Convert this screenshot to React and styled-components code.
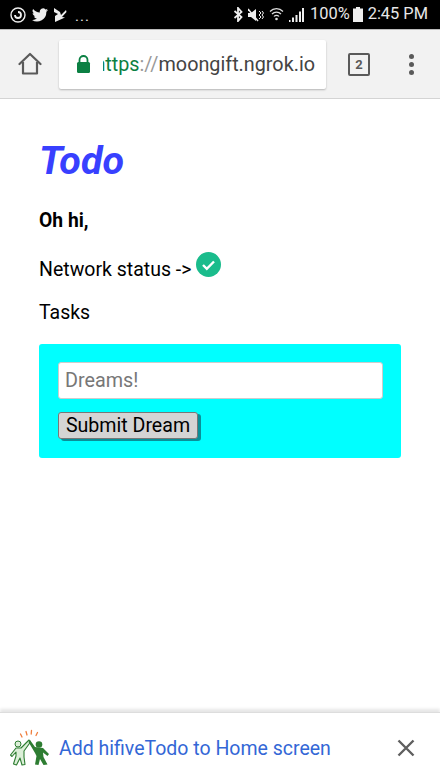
import React from "react";
import styled, { createGlobalStyle } from "styled-components";

const Global = createGlobalStyle`
  html, body { margin: 0; padding: 0; background: #fff; }
  body { font-family: Roboto, "Liberation Sans", sans-serif; }
  #root { width: 440px; height: 782px; overflow: hidden; }
  * { box-sizing: border-box; }
`;

const Screen = styled.div`
  width: 440px; height: 782px; display: flex; flex-direction: column; background: #fff;
`;
const StatusBar = styled.div`
  height: 29px; flex: none; background: #000; color: #e8e8e8; display: flex; align-items: center;
  justify-content: space-between; padding: 0 12px 0 10px;
`;
const StatusGroup = styled.div`
  display: flex; align-items: center; gap: ${p => p.$gap || 4}px;
`;
const Dots = styled.span`
  font-size: 15px; letter-spacing: 1px; margin-left: 2px; position: relative; top: 2px; line-height: 1;
`;
const StatusText = styled.span`
  font-size: 16.4px; line-height: 1; white-space: nowrap; margin: ${p => p.$margin || 0};
`;
const Toolbar = styled.div`
  height: 70px; flex: none; background: #f2f2f2; border-bottom: 1px solid #d4d4d4; border-top: 1px solid #bbb;
  display: flex; align-items: center;
`;
const HomeSlot = styled.div`
  width: 59px; flex: none; display: flex; justify-content: center;
`;
const Omnibox = styled.div`
  width: 267px; height: 49px; flex: none; background: #fff; border-radius: 2px; box-shadow: 0 1px 2px rgba(0,0,0,.25);
  display: flex; align-items: center; padding-left: 17px; overflow: hidden;
`;
const Url = styled.div`
  font-size: 19.8px; color: #444; margin-left: 12px; width: 212px; overflow: hidden;
  display: flex; justify-content: flex-end; white-space: nowrap;
`;
const UrlInner = styled.span`
  flex: none;
`;
const Green = styled.span` color: #0b8043; `;
const Faint = styled.span` color: #999; `;
const TabCount = styled.div`
  width: 22px; height: 23px; border: 2.5px solid #5a5a5a; border-radius: 2px; margin-left: 22px;
  font-size: 13px; font-weight: 700; color: #5a5a5a; display: flex; align-items: center; justify-content: center; flex: none;
`;
const Kebab = styled.div`
  display: flex; flex-direction: column; gap: 3px; margin-left: 39px;
`;
const Dot = styled.i`
  display: block; width: 5px; height: 5px; border-radius: 50%; background: #5a5a5a;
`;
const Page = styled.main`
  flex: 1; padding: 40px 39px 0; color: #000;
`;
const Title = styled.h1`
  margin: 0; color: #3840ff; font-style: italic; font-weight: 700; font-size: 39.4px; line-height: 44px;
`;
const Greeting = styled.p`
  margin: 27px 0 0; font-weight: 700; font-size: 19.3px; line-height: 22px;
`;
const StatusLine = styled.div`
  margin-top: 20px; display: flex; align-items: flex-start; height: 31px;
  font-size: 19.5px; line-height: 22px;
`;
const StatusLabel = styled.span`
  margin-top: 7px;
`;
const CheckBadge = styled.svg`
  width: 25px; height: 25px; margin-left: 5px;
`;
const Tasks = styled.p`
  margin: 19px 0 0; font-size: 19.5px; line-height: 22px;
`;
const DreamCard = styled.form`
  margin-top: 20px; width: 362px; height: 114px; background: #00ffff; border-radius: 3px; padding: 18px 19px;
  display: flex; flex-direction: column; align-items: flex-start;
`;
const DreamInput = styled.input`
  width: 325px; height: 37px; border: 1px solid #ccc; border-radius: 3px; background: #fff; padding: 0 6px;
  font: 400 19.8px Roboto, sans-serif; color: #000; outline: none;
  &::placeholder { color: #777; opacity: 1; }
`;
const SubmitButton = styled.button`
  margin-top: 13px; width: 140px; height: 27px; padding: 0; border: 1px solid #777; border-radius: 3px; background: #d4d4d4;
  box-shadow: 3px 2px 0 #0a8f98; font: 400 19.6px/24px Roboto, sans-serif; color: #000;
`;
const Banner = styled.div`
  height: 70px; flex: none; background: #fff; display: flex; align-items: center; padding: 0 0 0 10px;
  border-top: 1px solid #ddd; box-shadow: 0 -3px 3px rgba(0,0,0,.1);
`;
const BannerText = styled.span`
  color: #3367d6; font-size: 19.5px; margin-left: 9px; white-space: nowrap; flex: 1; position: relative; top: 1px;
`;
const Close = styled.div`
  margin-right: 25px; display: flex;
`;

const Home = () => (
  <svg width="24" height="24" viewBox="0 0 24 24" fill="none" stroke="#5a5a5a" strokeWidth="2.2" strokeLinejoin="round">
    <path d="M1.5 12 12 2l10.500 10" strokeLinecap="round" />
    <path d="M5 10v11.500h14V10" />
  </svg>
);
const Lock = () => (
  <svg width="15" height="19" viewBox="0 0 15 19">
    <path d="M3.500 8V5a4 4 0 0 1 8 0v3" fill="none" stroke="#0b8043" strokeWidth="1.800" />
    <rect x="1" y="7" width="13" height="11" rx="1.500" fill="#0b8043" />
  </svg>
);
const Twitter = () => (
  <svg width="16" height="14" viewBox="0 0 24 20" fill="#eee">
    <path d="M24 2.400a9.800 9.800 0 0 1-2.800.8A4.900 4.900 0 0 0 23.300.500a9.800 9.800 0 0 1-3.100 1.200 4.900 4.900 0 0 0-8.400 4.500A14 14 0 0 1 1.700 1a4.900 4.900 0 0 0 1.500 6.600 4.900 4.900 0 0 1-2.200-.6c0 2.400 1.700 4.400 3.900 4.900a4.900 4.900 0 0 1-2.200.1 4.900 4.900 0 0 0 4.600 3.400A9.900 9.900 0 0 1 0 17.400 14 14 0 0 0 21.500 5c1-.7 1.900-1.600 2.500-2.600z" />
  </svg>
);
const Pocket = () => (
  <svg width="13" height="14" viewBox="0 0 13 14" fill="#eee">
    <path d="M0 0 6 4 7 7 12 2 12.500 4 8 9l3 .5L1 14V8L4 6 0 4z" />
  </svg>
);
const Ring = () => (
  <svg width="16" height="16" viewBox="0 0 16 16" fill="none" stroke="#eee" strokeWidth="1.400">
    <circle cx="8" cy="8" r="7" />
    <path d="M5 8a3 3 0 1 0 6 0 3 3 0 0 0-3-3" strokeWidth="1.800" />
  </svg>
);
const Bluetooth = () => (
  <svg width="10" height="15" viewBox="0 0 9 15" fill="none" stroke="#eee" strokeWidth="1.800">
    <path d="M1 4l7 6-3.500 4V1L8 5l-7 6" />
  </svg>
);
const Muted = () => (
  <svg width="16" height="14" viewBox="0 0 16 14" fill="#eee">
    <path d="M0 5h3l5-4v12L3 9H0z" />
    <path d="M0 1l10 12" stroke="#eee" strokeWidth="1.500" />
    <path d="M11 3l2 2-2 2 2 2-2 2M14 3l1.500 2L14 7l1.500 2L14 11" fill="none" stroke="#eee" strokeWidth="1" />
  </svg>
);
const Wifi = () => (
  <svg width="15" height="15" viewBox="0 0 15 15" fill="none" stroke="#ddd" strokeWidth="1.200">
    <path d="M1 4.500a9 9 0 0 1 13 0M3 7a6.200 6.200 0 0 1 9 0M5 9.500a3.200 3.200 0 0 1 5 0" />
    <circle cx="7.500" cy="12" r="1.300" fill="#ddd" stroke="none" />
  </svg>
);
const Signal = () => (
  <svg width="15" height="14" viewBox="0 0 15 14" fill="#eee">
    <path d="M0 14h1.500v-2H0zM3 14h2V9.500H3zM6.500 14h2V7h-2zM10 14h2V3.500h-2zM13 14h2V0h-2z" />
  </svg>
);
const Battery = () => (
  <svg width="10" height="15" viewBox="0 0 10 15" fill="#eee">
    <path d="M3 0h4v1.500h3V15H0V1.500h3z" />
  </svg>
);
const Logo = () => (
  <svg width="40" height="38" viewBox="0 0 40 38" strokeLinejoin="round">
    <path d="M10.500 5l1.500 3M16 2.500l1 3.500M21.500 1.500l-.3 3.500M27.500 3.500l-1.500 3" stroke="#ef7d3c" strokeWidth="1.300" strokeLinecap="round" fill="none" />
    <path d="M19 11 20.500 13 14 22V28L15 35.500 12 36 10 29 6.500 36 3.500 35 6 27V23L2 27.500.5 26 6 19H11z" fill="#dcefd8" stroke="#2e7d32" strokeWidth="1.100" />
    <circle cx="8" cy="15" r="3" fill="#dcefd8" stroke="#2e7d32" strokeWidth="1" />
    <path d="M20 11 25 18 33 19 39 25 37.500 27 33 23.500 33.500 28 37.500 35.500 33.500 36 30 30 28.500 36 25 35.500 26.500 27 25 24 18.500 13z" fill="#2e7d32" />
    <circle cx="29" cy="15.500" r="3.300" fill="#2e7d32" />
  </svg>
);

export default function App() {
  return (
    <Screen>
      <Global />
      <StatusBar>
        <StatusGroup $gap={6}>
          <Ring /><Twitter /><Pocket /><Dots>...</Dots>
        </StatusGroup>
        <StatusGroup $gap={5}>
          <Bluetooth /><Muted /><Wifi /><Signal />
          <StatusText $margin="0 -2px 0 1px">100%</StatusText><Battery /><StatusText>2:45 PM</StatusText>
        </StatusGroup>
      </StatusBar>
      <Toolbar>
        <HomeSlot><Home /></HomeSlot>
        <Omnibox>
          <Lock />
          <Url>
            <UrlInner><Green>https</Green><Faint>://</Faint>moongift.ngrok.io</UrlInner>
          </Url>
        </Omnibox>
        <TabCount>2</TabCount>
        <Kebab><Dot /><Dot /><Dot /></Kebab>
      </Toolbar>
      <Page>
        <Title>Todo</Title>
        <Greeting>Oh hi,</Greeting>
        <StatusLine>
          <StatusLabel>Network status -&gt;</StatusLabel>
          <CheckBadge viewBox="0 0 25 25">
            <circle cx="12.500" cy="12.500" r="12.500" fill="#1abc8c" />
            <path d="M7 13l3.800 3.800L18 9.500" fill="none" stroke="#fff" strokeWidth="2.400" />
          </CheckBadge>
        </StatusLine>
        <Tasks>Tasks</Tasks>
        <DreamCard onSubmit={e => e.preventDefault()}>
          <DreamInput placeholder="Dreams!" />
          <SubmitButton>Submit Dream</SubmitButton>
        </DreamCard>
      </Page>
      <Banner>
        <Logo />
        <BannerText>Add hifiveTodo to Home screen</BannerText>
        <Close>
          <svg width="18" height="18" viewBox="0 0 18 18" stroke="#5f5f5f" strokeWidth="2.400">
            <path d="M1.500 1.500l15 15M16.500 1.500l-15 15" />
          </svg>
        </Close>
      </Banner>
    </Screen>
  );
}
